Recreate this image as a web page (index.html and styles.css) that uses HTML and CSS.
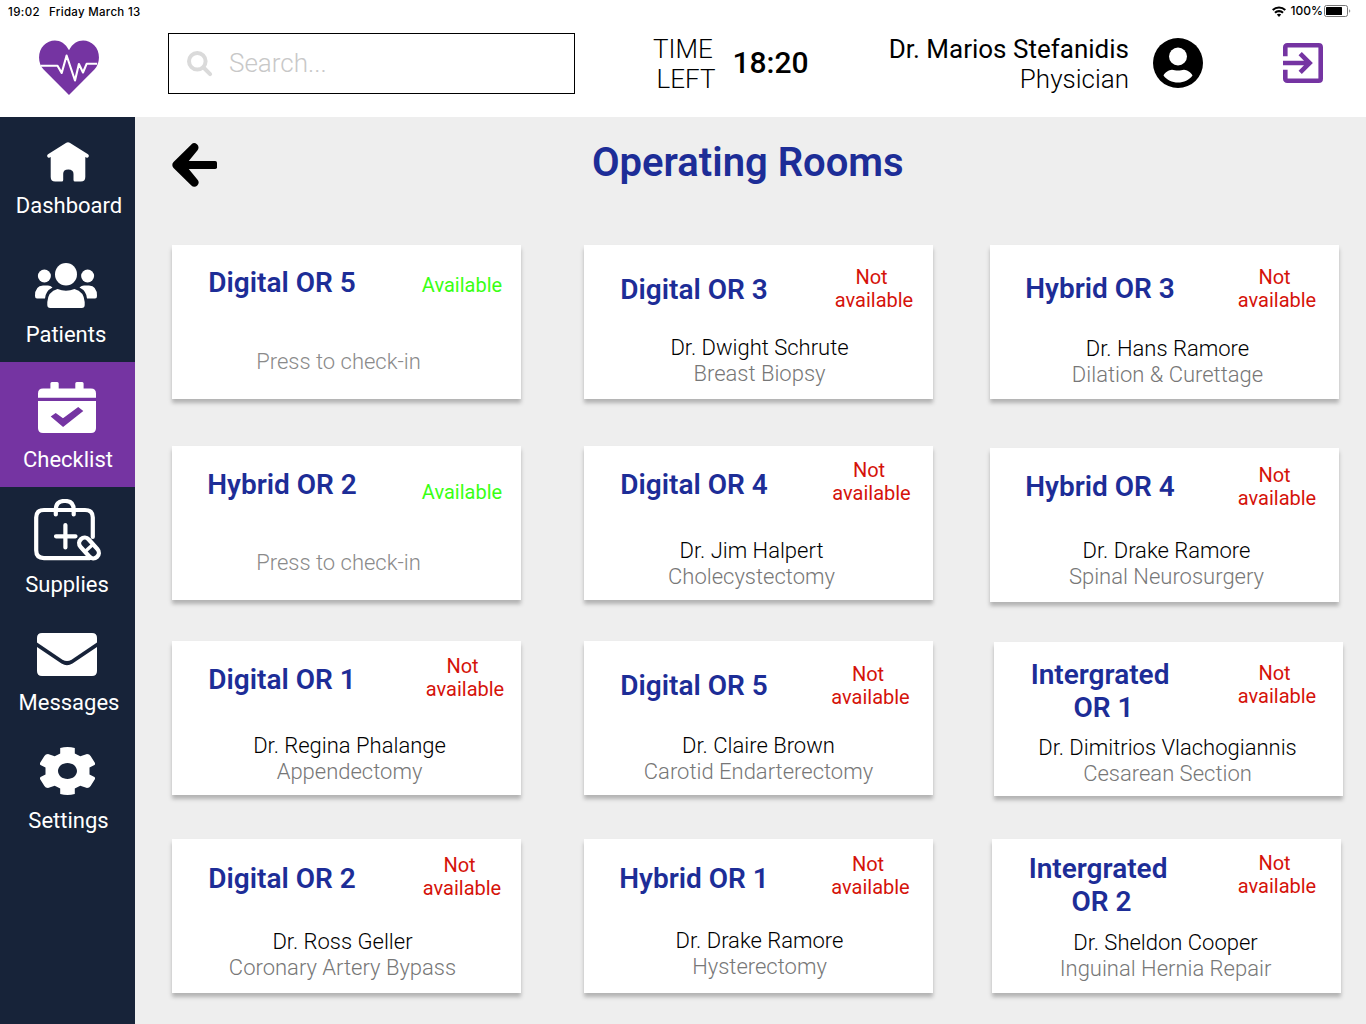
FILE: index.html
```html
<!DOCTYPE html>
<html lang="en">
<head>
<meta charset="utf-8">
<title>Operating Rooms</title>
<link rel="stylesheet" href="styles.css">
</head>
<body>
<header class="top">
  <div class="statusbar">
    <span class="statusbar-time">19:02</span>
    <span class="statusbar-date">Friday March 13</span>
    <svg class="wifi" viewBox="0 0 14 11"><g fill="none" stroke="#000" stroke-width="2.1"><path d="M.7 4.100C4.300.7 9.700.7 13.300 4.100"/><path d="M3 6.800c2.200-2.200 5.800-2.200 8 0"/></g><path d="M4.800 8.600c1.200-1.200 3.200-1.200 4.400 0L7 10.900z"/></svg>
    <span class="statusbar-charge">100%</span>
    <svg class="battery" viewBox="0 0 27 12"><rect x=".5" y=".5" width="23" height="11" rx="2" fill="none" stroke="#777"/><rect x="2" y="2" width="16" height="8" rx=".5"/><path d="M25 4.200v3.600q1.300-.5 1.300-1.800T25 4.200z" fill="#999"/></svg>
  </div>
  <div class="toolbar">
    <svg class="logo" viewBox="0 0 60 55"><path fill="#7534a2" d="M30 55 4.600 29.500C-1.500 23-1.500 11.500 4.800 5.200 11.800-1.800 24-1.800 30 10.200 36-1.800 48.200-1.800 55.200 5.200c6.300 6.300 6.300 17.800.2 24.300z"/><path fill="none" stroke="#fff" stroke-width="2.100" stroke-linejoin="round" d="M1.800 25.700H18.500l4.200 7.300L27.600 15.500 36 40.500l3.900-16.500L44 32.500l3.600-8.700h10.600"/></svg>
    <div class="search">
      <svg class="search-icon" viewBox="0 0 26 26"><circle cx="10.300" cy="10.300" r="8.300"/><path d="m16.500 16.500 6.600 6.600"/></svg>
      <span class="search-text">Search...</span>
    </div>
    <div class="timer-label">TIME 
LEFT</div>
    <div class="timer">18:20</div>
    <div class="user"><span class="user-name">Dr. Marios Stefanidis</span><span class="user-role">Physician</span></div>
    <svg class="avatar" viewBox="0 0 50 50"><circle cx="25" cy="25" r="25"/><circle cx="25" cy="18.500" r="9" fill="#fff"/><path fill="#fff" d="M10.500 37.500C12 34 16 32 19 31.700c2 0 3.500.8 6 .8s4-.8 6-.8c3 .3 7 2.300 8.500 5.800C36 42.300 31 44.500 25 44.500S14 42.300 10.500 37.500z"/></svg>
    <svg class="logout" viewBox="0 0 40 40"><g fill="none" stroke="#7534a2" stroke-width="4.600"><path d="M2.300 13.300V4.300q0-2 2-2h31.400q2 0 2 2v31.400q0 2-2 2H4.300q-2 0-2-2v-9"/><path d="M0 20h26M17.200 10.600 26.600 20l-9.400 9.400"/></g></svg>
  </div>
</header>
<div class="body">
  <nav class="nav">
    <a class="item item--dashboard">
      <svg class="icon" viewBox="0 0 42 40"><path fill="#fff" d="M19.300.7q1.700-1.100 3.400 0l18.300 11.600q1.300 1 .6 2.400t-2.300.8l-1-.4V35q0 4.500-4.500 4.500H28q-1.500 0-1.500-1.500v-6q0-4.500-5.200-4.500T16.200 32v6q0 1.500-1.500 1.500H8.200q-4.500 0-4.500-4.500V15.100l-1 .4q-1.600.6-2.300-.8T1 12.300z"/></svg>
      <span class="label">Dashboard</span>
    </a>
    <a class="item item--patients">
      <svg class="icon" viewBox="0 0 62 46"><g fill="#fff"><ellipse cx="31" cy="11.300" rx="11" ry="11.300"/><circle cx="9.400" cy="13" r="6.500"/><circle cx="52.600" cy="13" r="6.500"/><path d="M12.300 42V39Q13 28.500 22.500 26q8.500 3.500 17 0 9.500 2.500 10.200 13v3q0 3-3 3H15.300q-3 0-3-3z"/><path d="M10 35.600H2Q0 35.600 0 33 0 23 8 22.600h5q2.500 0 4.500 1.900Q10.500 28 10 35.600zM52 35.600h8q2 0 2-2.600 0-10-8-10.400h-5q-2.500 0-4.500 1.900Q51.500 28 52 35.600z"/></g></svg>
      <span class="label">Patients</span>
    </a>
    <a class="item item--checklist">
      <svg class="icon" viewBox="0 0 58 51"><path fill="#fff" d="M0 15.700V11.400q0-5 5-5h7.400V1.500Q12.400 0 13.900 0h5.300q1.500 0 1.500 1.500v4.900h16.600V1.500q0-1.500 1.500-1.500h5.300q1.500 0 1.500 1.500v4.900H53q5 0 5 5v4.300z"/><path fill="#fff" d="M0 19h58v27q0 5-5 5H5q-5 0-5-5z"/><path fill="#7534a2" d="m12.700 34.500 5-3.500 7.300 5.300L40.200 25l5.100 4-20.200 16z"/></svg>
      <span class="label">Checklist</span>
    </a>
    <a class="item item--supplies">
      <svg class="icon" viewBox="0 0 68 62"><g fill="none" stroke="#fff" stroke-width="4.200" stroke-linecap="round"><path d="M58.800 38V18.500Q58.800 11 51 11H10Q2.200 11 2.200 18.500v32.800q0 7.800 7.800 7.800h46"/><path d="M21.800 15.500V11q0-9 8.200-9h1.500q8.200 0 8.200 9v4.500M31.400 26v22.500M22 37.300h19.500"/></g><g transform="translate(55 49) rotate(48)"><rect x="-12" y="-5.500" width="24" height="11" rx="5.500" fill="#172339" stroke="#fff" stroke-width="4.300"/><path d="M0-5.500v11" stroke="#fff" stroke-width="3.400"/></g></svg>
      <span class="label">Supplies</span>
    </a>
    <a class="item item--messages">
      <svg class="icon" viewBox="0 0 60 43"><path fill="#fff" d="M0 9.500V5q0-5 5-5h50q5 0 5 5v4.500L34.500 26.700q-4.500 2.800-9 0z"/><path fill="#fff" d="M0 14v24q0 5 5 5h50q5 0 5-5V14L35.500 30.500q-5.500 3.400-11 0z"/></svg>
      <span class="label">Messages</span>
    </a>
    <a class="item item--settings">
      <svg class="icon" viewBox="0 0 55 48"><path fill="#fff" fill-rule="evenodd" d="M20.200 1q7.300-1.800 14.600 0v5.500l5.500 2.800L47 6.900q2.500.2 3.600 2l4.400 7q.2 1.700-.5 2.100l-5 2.500v7l5 2.500q.8.800.5 2.100l-4.400 7q-1.200 1.900-3.600 2l-6.700-2.400-5.500 2.800V47q-7.300 1.800-14.600 0v-5.500l-5.500-2.800L8 41.100q-2.500-.2-3.600-2L0 32.100q-.2-1.500.5-2.100l5-2.500v-7L.5 18q-.8-.8-.5-2.100l4.400-7q1.200-1.900 3.600-2l6.700 2.400 5.500-2.800zM27.500 16c-5.300 0-9.500 3.600-9.500 8s4.200 8 9.500 8 9.500-3.600 9.500-8-4.200-8-9.500-8z"/></svg>
      <span class="label">Settings</span>
    </a>
  </nav>
  <main class="main">
    <div class="heading">
      <svg class="back" viewBox="0 0 45 44"><path fill="#000" stroke="#000" stroke-width="8.400" stroke-linecap="round" stroke-linejoin="round" d="M22.300 4.500 4.500 22l17.800 17.500L8 22z"/><rect x="5" y="18" width="40" height="8" rx="1.800"/></svg>
      <h1 class="title">Operating Rooms</h1>
    </div>
    <section class="rooms">
      <article class="card card--a1"><h2 class="name">Digital OR 5</h2><p class="state state--free">Available</p><p class="info"><span class="hint">Press to check-in</span></p></article>
      <article class="card card--a2"><h2 class="name">Digital OR 3</h2><p class="state">Not 
available</p><p class="info">Dr. Dwight Schrute<span class="case">Breast Biopsy</span></p></article>
      <article class="card card--a3"><h2 class="name">Hybrid OR 3</h2><p class="state">Not 
available</p><p class="info">Dr. Hans Ramore<span class="case">Dilation &amp; Curettage</span></p></article>
      <article class="card card--b1"><h2 class="name">Hybrid OR 2</h2><p class="state state--free">Available</p><p class="info"><span class="hint">Press to check-in</span></p></article>
      <article class="card card--b2"><h2 class="name">Digital OR 4</h2><p class="state">Not 
available</p><p class="info">Dr. Jim Halpert<span class="case">Cholecystectomy</span></p></article>
      <article class="card card--b3"><h2 class="name">Hybrid OR 4</h2><p class="state">Not 
available</p><p class="info">Dr. Drake Ramore<span class="case">Spinal Neurosurgery</span></p></article>
      <article class="card card--c1"><h2 class="name">Digital OR 1</h2><p class="state">Not 
available</p><p class="info">Dr. Regina Phalange<span class="case">Appendectomy</span></p></article>
      <article class="card card--c2"><h2 class="name">Digital OR 5</h2><p class="state">Not 
available</p><p class="info">Dr. Claire Brown<span class="case">Carotid Endarterectomy</span></p></article>
      <article class="card card--c3"><h2 class="name">Intergrated 
OR 1</h2><p class="state">Not 
available</p><p class="info">Dr. Dimitrios Vlachogiannis<span class="case">Cesarean Section</span></p></article>
      <article class="card card--d1"><h2 class="name">Digital OR 2</h2><p class="state">Not 
available</p><p class="info">Dr. Ross Geller<span class="case">Coronary Artery Bypass</span></p></article>
      <article class="card card--d2"><h2 class="name">Hybrid OR 1</h2><p class="state">Not 
available</p><p class="info">Dr. Drake Ramore<span class="case">Hysterectomy</span></p></article>
      <article class="card card--d3"><h2 class="name">Intergrated 
OR 2</h2><p class="state">Not 
available</p><p class="info">Dr. Sheldon Cooper<span class="case">Inguinal Hernia Repair</span></p></article>
    </section>
  </main>
</div>
</body>
</html>
```
FILE: styles.css
```css
* { box-sizing: border-box; }

body {
  margin: 0;
  width: 1366px;
  height: 1024px;
  overflow: hidden;
  display: flex;
  flex-direction: column;
  font-family: Roboto, sans-serif;
  color: #000;
  background: #fff;
}

svg { display: block; flex: none; }
h1, h2, p { margin: 0; }

/* Header */
.top { height: 117px; flex: none; }

.statusbar {
  height: 24px;
  padding: 0 15px 0 8px;
  display: flex;
  align-items: center;
  font: 450 11.500px/24px Inter, sans-serif;
}
.statusbar-time { letter-spacing: 0.4px; }
.statusbar-date { margin-left: 9px; letter-spacing: 0.3px; }
.wifi { width: 14px; height: 11px; margin: 0 0 2px auto; }
.statusbar-charge { margin: -2px 0 0 5px; font-size: 12px; }
.battery { width: 27px; height: 12px; margin: 0 0 3px 1px; }

.toolbar { display: flex; align-items: flex-start; }
.logo { width: 60px; height: 55px; margin: 16px 0 0 39px; }

.search {
  width: 407px;
  height: 61px;
  margin: 9px 0 0 69px;
  padding-left: 18px;
  border: 1px solid #000;
  display: flex;
  align-items: center;
  gap: 16px;
  font-size: 26px;
  font-weight: 300;
  color: #c8c8c8;
}
.search-icon { width: 26px; height: 26px; fill: none; stroke: #dadada; stroke-width: 4; stroke-linecap: round; }
.search-text { margin-bottom: 2px; }

.timer-label {
  width: 66px;
  margin: 10px 0 0 78px;
  font-size: 26px;
  font-weight: 300;
  line-height: 30px;
  text-align: center;
  white-space: pre;
}
.timer { width: 76px; margin: 21px 0 0 13.500px; font-size: 30px; font-weight: 500; line-height: 36px; }

.user {
  width: 260px;
  margin: 10px 0 0 60.500px;
  display: flex;
  flex-direction: column;
  align-items: flex-end;
  font-size: 26px;
  line-height: 30px;
}
.user-role { font-weight: 300; }
.avatar { width: 50px; height: 50px; margin: 14px 0 0 24px; }
.logout { width: 40px; height: 40px; margin: 19px 0 0 80px; }

/* Sidebar */
.body { flex: 1; display: flex; }
.nav { width: 135px; flex: none; background: #172339; color: #fff; }
.item { display: flex; flex-direction: column; align-items: flex-start; }
.label { width: 136px; font-size: 22px; line-height: 26px; text-align: center; }

.item--dashboard { height: 123px; padding-top: 25px; }
.item--dashboard .icon { width: 42px; height: 40px; margin-left: 47px; }
.item--dashboard .label { margin: 11px 0 0 1px; }

.item--patients { height: 122px; padding-top: 23px; }
.item--patients .icon { width: 62px; height: 46px; margin-left: 35px; }
.item--patients .label { margin: 13px 0 0 -2px; }

.item--checklist { height: 125px; padding-top: 20px; background: #7534a2; }
.item--checklist .icon { width: 58px; height: 51px; margin-left: 38px; }
.item--checklist .label { margin-top: 14px; }

.item--supplies { height: 120px; padding-top: 12px; }
.item--supplies .icon { width: 68px; height: 62px; margin-left: 34px; }
.item--supplies .label { margin: 11px 0 0 -1px; }

.item--messages { height: 120px; padding-top: 26px; }
.item--messages .icon { width: 60px; height: 43px; margin-left: 37px; }
.item--messages .label { margin: 14px 0 0 1px; }

.item--settings { padding-top: 20px; }
.item--settings .icon { width: 55px; height: 48px; margin-left: 40px; }
.item--settings .label { margin: 13px 0 0 0.500px; }

/* Rooms */
.main { flex: 1; background: #eee; padding: 26px 0 0 37px; }
.heading { height: 102px; display: flex; align-items: flex-start; }
.back { width: 45px; height: 44px; }
.title {
  width: 312px;
  margin: -4px 0 0 375px;
  font-size: 40px;
  font-weight: 600;
  line-height: 47px;
  white-space: nowrap;
  color: #1d2d97;
}

.rooms {
  display: grid;
  grid-template-columns: 412px 406px 350px;
  grid-template-rows: 201px 195px 198px 155px;
}

.card {
  width: 349px;
  height: 154px;
  display: grid;
  grid-template-columns: 220px 130px;
  grid-template-rows: 80px 1fr;
  align-items: start;
  background: #fff;
  box-shadow: 0 4px 4px rgba(0, 0, 0, 0.25);
}
.name {
  margin: var(--name-y) 0 0 calc(2 * var(--name-x, 0px));
  font-size: 28px;
  font-weight: 600;
  line-height: 33px;
  text-align: center;
  white-space: pre;
  color: #1d2d97;
}
.state {
  margin: var(--state-y) 0 0 calc(2 * var(--state-x, 0px));
  font-size: 20px;
  line-height: 23px;
  text-align: center;
  white-space: pre;
  color: #d5130a;
}
.state--free { color: #39ff14; }
.info {
  grid-column: 1 / -1;
  margin: var(--info-y) 0 0 calc(2 * var(--info-x, 0px));
  font-size: 22px;
  font-weight: 300;
  line-height: 26px;
  text-align: center;
}
.case { display: block; color: #777; }
.hint { color: #8a8a8a; }

.card--a1 { --name-y: 21px; --state-y: 29px; --state-x: 5px; --info-y: 24px; --info-x: -8.500px; }
.card--a2 { --name-y: 28px; --state-y: 21px; --state-x: 5px; --info-y: 10px; --info-x: 0.500px; }
.card--a3 { --name-y: 27px; --state-y: 21px; --state-x: 2px; --info-y: 11px; --info-x: 2.500px; }
.card--b1 { --name-y: 22px; --state-y: 35px; --state-x: 5px; --info-y: 24px; --info-x: -8.500px; }
.card--b2 { --name-y: 22px; --state-y: 13px; --state-x: 2.500px; --info-y: 12px; --info-x: -7.500px; }
.card--b3 { --name-y: 22px; --state-y: 16px; --state-x: 2px; --info-y: 10px; --info-x: 1.500px; margin-top: 2px; }
.card--c1 { --name-y: 22px; --state-y: 14px; --state-x: 8px; --info-y: 12px; --info-x: 2.500px; }
.card--c2 { --name-y: 28px; --state-y: 22px; --state-x: 1.500px; --info-y: 12px; --info-x: -0.500px; }
.card--c3 { --name-y: 16px; --name-x: -0.500px; --state-y: 20px; --state-x: -2px; --info-y: 13px; --info-x: -1.500px; margin: 1px 0 0 4px; }
.card--d1 { --name-y: 23px; --state-y: 15px; --state-x: 5px; --info-y: 10px; --info-x: -4.500px; }
.card--d2 { --name-y: 23px; --state-y: 14px; --state-x: 1.500px; --info-y: 9px; --info-x: 0.500px; }
.card--d3 { --name-y: 13px; --name-x: -0.500px; --state-y: 13px; --info-y: 11px; --info-x: -1.500px; margin-left: 2px; }
```
